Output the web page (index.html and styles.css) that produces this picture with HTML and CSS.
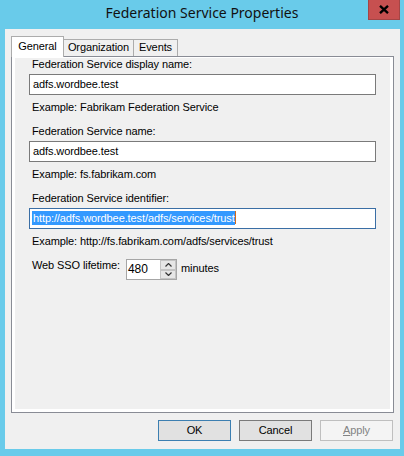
FILE: index.html
```html
<!DOCTYPE html>
<html lang="en">
<head>
  <meta charset="UTF-8" />
  <meta name="viewport" content="width=device-width, initial-scale=1.0" />
  <title>Federation Service Properties</title>
  <link rel="stylesheet" href="styles.css">
</head>
<body>
  <div class="window">
    <div class="titlebar">
      <span></span>
      <div class="title">Federation Service Properties</div>
      <div class="close">
        <svg width="10" height="9" viewBox="0 0 10 9">
          <path d="M1 0.8 L9 8.2 M9 0.8 L1 8.2" stroke="#000" stroke-width="2.3" fill="none" />
        </svg>
      </div>
    </div>

    <div class="client">
      <div class="tabs">
        <div class="tab active tab-general">General</div>
        <div class="tab tab-org">Organization</div>
        <div class="tab tab-events">Events</div>
      </div>

      <div class="panel">
        <div class="page">
          <div class="label first">Federation Service display name:</div>
          <div class="textbox">adfs.wordbee.test</div>
          <div class="example">Example: Fabrikam Federation Service</div>

          <div class="label">Federation Service name:</div>
          <div class="textbox">adfs.wordbee.test</div>
          <div class="example">Example: fs.fabrikam.com</div>

          <div class="label">Federation Service identifier:</div>
          <div class="textbox focused"><span class="selection">http://adfs.wordbee.test/adfs/services/trust</span><span class="caret"></span></div>
          <div class="example">Example: http://fs.fabrikam.com/adfs/services/trust</div>

          <div class="sso-row">
            <div class="sso-label">Web SSO lifetime:</div>
            <div class="spin">
              <div class="spin-value">480</div>
              <div class="spin-buttons">
                <div class="spin-btn">
                  <svg width="7" height="4" viewBox="0 0 7 4"><path d="M0.5 3.5 L3.5 0.5 L6.5 3.5" stroke="#333" stroke-width="1.2" fill="none" /></svg>
                </div>
                <div class="spin-btn">
                  <svg width="7" height="4" viewBox="0 0 7 4"><path d="M0.5 0.5 L3.5 3.5 L6.5 0.5" stroke="#333" stroke-width="1.2" fill="none" /></svg>
                </div>
              </div>
            </div>
            <div class="sso-unit">minutes</div>
          </div>
        </div>
      </div>

      <div class="buttons">
        <div class="btn default">OK</div>
        <div class="btn">Cancel</div>
        <div class="btn disabled"><u>A</u>pply</div>
      </div>
    </div>
  </div>
</body>
</html>
```

FILE: styles.css
```css
body {
  margin: 0;
  background: #69cbea;
  font-family: "Liberation Sans", Arial, sans-serif;
  font-size: 11px;
  letter-spacing: -0.1px;
  color: #000;
}
.window {
  width: 404px;
  height: 456px;
}

/* title bar */
.titlebar {
  height: 29px;
  display: grid;
  grid-template-columns: 1fr auto 1fr;
  align-items: start;
}
.title {
  font-family: "Noto Sans", sans-serif;
  font-size: 14px;
  line-height: 20px;
  letter-spacing: 0;
  padding-top: 3px;
  color: #111;
}
.close {
  justify-self: end;
  width: 32px;
  height: 20px;
  margin-right: 4px;
  box-sizing: border-box;
  background: #c75050;
  border: 1px solid #a44545;
  border-top: none;
  display: flex;
  align-items: center;
  justify-content: center;
}

/* dialog body */
.client {
  margin: 0 4px 0 5px;
  height: 420px;
  box-sizing: border-box;
  background: #f0f0f0;
  padding: 7px 6px 0 6px;
}
.tabs {
  display: flex;
  align-items: flex-end;
  height: 20px;
}
.tab {
  box-sizing: border-box;
  height: 17px;
  border: 1px solid #acacac;
  border-bottom: none;
  background: #f0f0f0;
  margin-left: -1px;
  padding-top: 1px;
  line-height: 13px;
  text-align: center;
}
.tab.active {
  height: 21px;
  margin-bottom: -1px;
  margin-left: 0;
  padding-top: 3px;
  background: #fff;
  position: relative;
  z-index: 1;
}
.tab-general { width: 53px; }
.tab-org { width: 71px; }
.tab-events { width: 45px; }

.panel {
  height: 357px;
  box-sizing: border-box;
  border: 1px solid #898c95;
  background: #fff;
  padding: 1px 3px 3px 3px;
}
.page {
  height: 100%;
  background: #f0f0f0;
  padding-left: 14px;
}
.label {
  line-height: 13px;
  margin: 11px 0 0 3px;
}
.label.first {
  margin-top: 0;
}
.textbox {
  width: 347px;
  height: 21px;
  box-sizing: border-box;
  margin-top: 3px;
  border: 1px solid #7a7a7a;
  background: #fff;
  line-height: 19px;
  padding-left: 3px;
  white-space: nowrap;
}
.textbox.focused {
  border-color: #3a6ea5;
  padding-left: 2px;
}
.selection {
  background: #3399ff;
  color: #fff;
  padding: 1px 0 1px 1px;
}
.caret {
  display: inline-block;
  width: 1px;
  height: 13px;
  vertical-align: -2px;
  background: #d36b1a;
}
.example {
  line-height: 13px;
  margin: 6px 0 0 3px;
}

/* SSO lifetime */
.sso-row {
  display: flex;
  margin: 11px 0 0 3px;
}
.sso-label {
  width: 94px;
  line-height: 13px;
}
.spin {
  width: 51px;
  height: 21px;
  box-sizing: border-box;
  border: 1px solid #a6a6a6;
  background: #fff;
  display: flex;
}
.spin-value {
  flex: 1;
  font-size: 12px;
  line-height: 19px;
  padding-left: 1px;
}
.spin-buttons {
  width: 16px;
  display: flex;
  flex-direction: column;
  background: #d6d6d6;
}
.spin-btn {
  flex: 1;
  box-sizing: border-box;
  border: 1px solid #c4c4c4;
  background: #e6e6e6;
  display: flex;
  align-items: center;
  justify-content: center;
}
.sso-unit {
  margin: 3px 0 0 4px;
  line-height: 13px;
}

/* dialog buttons */
.buttons {
  display: flex;
  justify-content: flex-end;
  gap: 8px;
  margin-top: 7px;
  padding-right: 1px;
}
.btn {
  width: 73px;
  height: 21px;
  box-sizing: border-box;
  border: 1px solid #7a7a7a;
  background: #e1e1e1;
  line-height: 19px;
  text-align: center;
}
.btn.default {
  border-color: #3c7fb1;
}
.btn.disabled {
  border-color: #bfbfbf;
  background: #f4f4f4;
  color: #838383;
}
```
